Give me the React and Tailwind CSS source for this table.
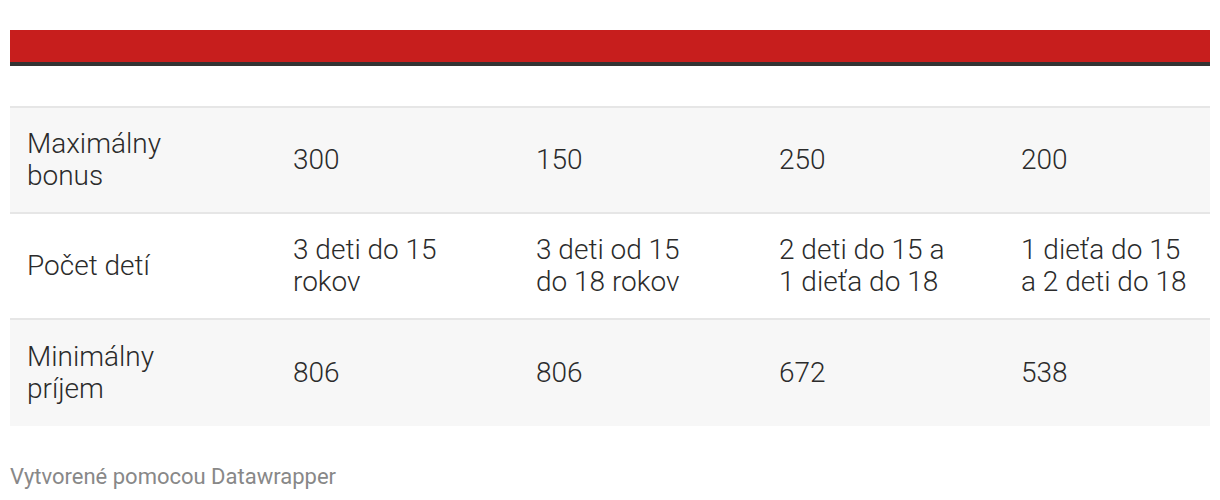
import React from 'react';

const rows = [
    { label: 'Maximálny bonus', cells: ['300', '150', '250', '200'], shaded: true },
    { label: 'Počet detí', cells: ['3 deti do 15 rokov', '3 deti od 15 do 18 rokov', '2 deti do 15 a 1 dieťa do 18', '1 dieťa do 15 a 2 deti do 18'], shaded: false },
    { label: 'Minimálny príjem', cells: ['806', '806', '672', '538'], shaded: true },
];

const App = () => {
    return (
        <div className="bg-white w-[1220px] h-[500px] pt-[30px] px-[10px]" style={{ fontFamily: 'Roboto, "Noto Sans", sans-serif' }}>
            {/* Header bar */}
            <div className="h-[36px] bg-[#c71e1d] border-b-[4px] border-[#333333]"></div>
            <div className="h-[42px] border-b-2 border-[#e6e6e6]"></div>

            {/* Body rows */}
            {rows.map((row, i) => (
                <div
                    key={row.label}
                    className={`grid grid-cols-[266px_243px_243px_242px_1fr] items-center h-[106px] text-[28px] leading-[32px] font-light text-[#2b2b2b] ${row.shaded ? 'bg-[#f7f7f7]' : 'bg-white'} ${i < rows.length - 1 ? 'border-b-2 border-[#e6e6e6]' : ''}`}
                >
                    <div className="pl-[17px] pr-[50px]">{row.label}</div>
                    {row.cells.map((c, j) => (
                        <div key={j} className={j < 3 ? 'pl-[17px] pr-[58px]' : 'pl-[17px] pr-[14px]'}>{c}</div>
                    ))}
                </div>
            ))}

            <div className="mt-[37px] text-[22px] leading-[28px] text-[#888888]">Vytvorené pomocou Datawrapper</div>
        </div>
    );
};

export default App;
